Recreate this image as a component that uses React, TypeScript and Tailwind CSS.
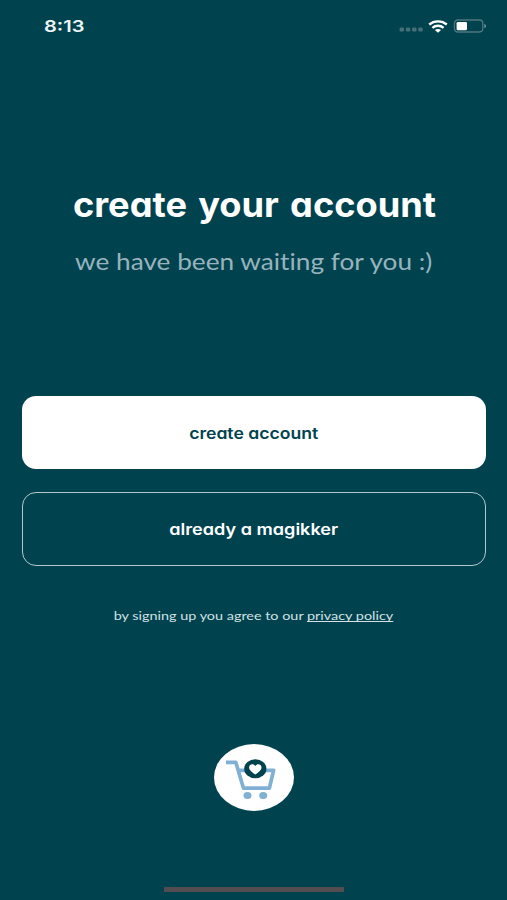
import React from 'react'

const HEADING = "font-['Inter',sans-serif] [font-feature-settings:'cv11']"
const BODY = "font-['Lato',sans-serif] [font-variant-ligatures:none]"

const StatusBar = () => {
    return (
        <div className="flex h-[52px] items-center justify-between pl-11 pr-5">
            <span className="inline-block origin-left scale-x-[1.25] font-['Inter',sans-serif] text-[16px] font-semibold leading-none text-[#eef5f7]">
                8:13
            </span>
            <div className="flex items-center">
                <svg width="24" height="5" viewBox="0 0 24 5" className="mt-[7px]" fill="#456f79">
                    <rect x="0.6" y="0.6" width="4.4" height="3.8" rx="1.2" />
                    <rect x="6.9" y="0.6" width="4.4" height="3.8" rx="1.2" />
                    <rect x="13.1" y="0.6" width="4.4" height="3.8" rx="1.2" />
                    <rect x="19.3" y="0.6" width="4.4" height="3.8" rx="1.2" />
                </svg>
                <svg width="20" height="13" viewBox="0 0 20 13" className="ml-[5px]" fill="none" stroke="#fff" strokeWidth="2.4">
                    <path d="M1.2 4.5C6.2 0.3 13.8 0.3 18.8 4.5" />
                    <path d="M4.4 7.8C7.6 5.1 12.4 5.1 15.6 7.8" />
                    <path d="M6.9 9.9C8.7 8.6 11.3 8.6 13.1 9.9L10 12.7Z" fill="#fff" stroke="none" />
                </svg>
                <svg width="34" height="14" viewBox="0 0 34 14" className="ml-[5px]" fill="none">
                    <rect x="1.4" y="1" width="28.4" height="12" rx="3.4" stroke="#4e7781" strokeWidth="1.3" />
                    <rect x="3.6" y="2.9" width="10.4" height="8.4" rx="1.4" fill="#fff" />
                    <path d="M31.4 5V9.2C33.4 8.6 33.4 5.6 31.4 5Z" fill="#7b9aa2" />
                </svg>
            </div>
        </div>
    )
}

const CartLogo = () => {
    return (
        <svg width="80" height="67" viewBox="0 0 80 67" fill="none">
            <ellipse cx="40" cy="33.5" rx="40" ry="33.4" fill="#fff" />
            <path d="M12 18.3H21.8L29.5 44.2H55.4L59.6 26.4H24.2" stroke="#80b0d3" strokeWidth="3.7" strokeLinejoin="round" />
            <ellipse cx="33.5" cy="51.5" rx="4" ry="3.5" fill="#80b0d3" />
            <ellipse cx="49.2" cy="51.5" rx="4" ry="3.5" fill="#80b0d3" />
            <ellipse cx="41.3" cy="24.8" rx="11.1" ry="9.5" fill="#00434f" />
            <path d="M41.3 30.6C38.3 28.4 35.1 26.2 35.1 23.5C35.1 20.1 39.4 19.1 41.3 21.9C43.2 19.1 47.5 20.1 47.5 23.5C47.5 26.2 44.3 28.4 41.3 30.6Z" fill="#fff" />
        </svg>
    )
}

const App = () => {
    return (
        <div className="flex h-[900px] w-full flex-col overflow-hidden bg-[#00434f]">
            <StatusBar />

            <div className="mt-[129px] flex flex-col items-center whitespace-nowrap">
                <h1 className={`${HEADING} scale-x-[1.065] pl-px text-[34px] font-bold leading-[48px] text-white [word-spacing:2.5px]`}>
                    create your account
                </h1>
                <p className={`${BODY} mt-2 scale-x-[1.14] text-[23px] leading-[48px] text-[#97b3be]`}>
                    we have been waiting for you :)
                </p>
            </div>

            <div className="mt-[111px] flex flex-col gap-[23px] pl-[22px] pr-[21px]">
                <button type="button" className={`${HEADING} h-[73px] rounded-[14px] bg-white text-[16px] font-semibold text-[#00434f]`}>
                    <span className="inline-block scale-x-[1.1]">create account</span>
                </button>
                <button type="button" className={`${HEADING} h-[74px] rounded-[14px] border border-[#b3c8ce] text-[16px] font-semibold text-white`}>
                    <span className="inline-block scale-x-[1.13]">already a magikker</span>
                </button>
            </div>

            <p className={`${BODY} mt-10 self-center whitespace-nowrap scale-x-[1.2] text-[12px] leading-5 text-[#d3e0e4]`}>
                by signing up you agree to our <a href="#" className="underline [text-decoration-skip-ink:none]">privacy policy</a>
            </p>

            <div className="mt-[118px] flex justify-center pl-px">
                <CartLogo />
            </div>

            <div className="mt-auto mb-2 ml-[164px] h-[5px] w-[180px] rounded-[1px] bg-[#534c50]" />
        </div>
    )
}

export default App
